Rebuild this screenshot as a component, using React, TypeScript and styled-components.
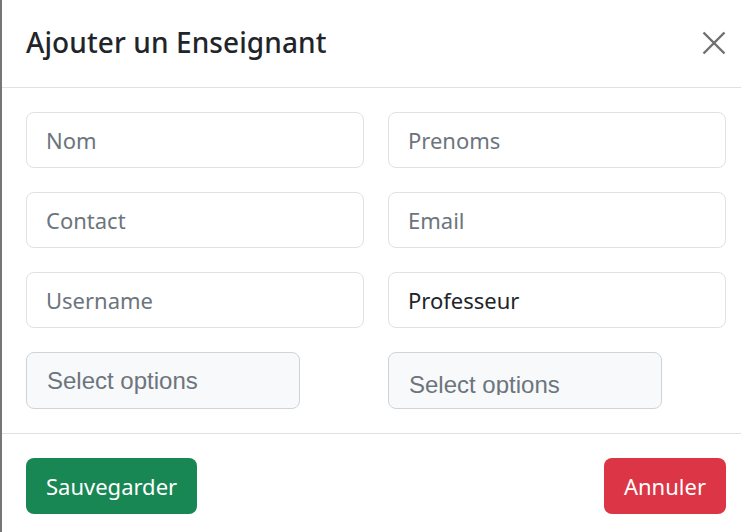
import styled, { createGlobalStyle } from "styled-components";

const GlobalStyle = createGlobalStyle`
  html, body {
    margin: 0;
    padding: 0;
    background: #ffffff;
  }
  body {
    font-family: "Noto Sans", "Open Sans", sans-serif;
    overflow: hidden;
  }
`;

const Backdrop = styled.div`
  width: 741px;
  height: 532px;
  border-left: 2px solid #767676;
  box-sizing: border-box;
  overflow: hidden;
`;

const ModalContent = styled.div`
  display: flex;
  flex-direction: column;
  background: #fff;
  border-bottom-left-radius: 8px;
`;

const ModalHeader = styled.div`
  display: flex;
  align-items: center;
  justify-content: space-between;
  height: 88px;
  padding: 0 15px 4px 24px;
  box-sizing: border-box;
  border-bottom: 1px solid #dee2e6;
`;

const ModalTitle = styled.h5`
  margin: 0;
  font-size: 28px;
  font-weight: 500;
  color: #212529;
  letter-spacing: 0.1px;
`;

const CloseButton = styled.button`
  width: 26px;
  height: 26px;
  padding: 0;
  border: none;
  background: transparent;
  display: flex;
  align-items: center;
  justify-content: center;
  margin-right: -1px;
  margin-top: 3px;
  cursor: pointer;
`;

const ModalBody = styled.div`
  display: grid;
  grid-template-columns: 338px 338px;
  column-gap: 24px;
  row-gap: 24px;
  padding: 24px 15px 24px 24px;
`;

const Input = styled.input`
  height: 56px;
  box-sizing: border-box;
  border: 1px solid #dee2e6;
  border-radius: 8px;
  padding: 0 19px;
  font-family: "Noto Sans", "Open Sans", sans-serif;
  font-size: 22px;
  color: #212529;
  background: #fff;
  outline: none;
  &::placeholder {
    color: #6c757d;
  }
`;

const SelectBox = styled.div`
  width: 274px;
  height: 57px;
  box-sizing: border-box;
  border: 1px solid #ced4da;
  border-radius: 8px;
  background: #f8f9fa;
  padding: 14px 20px 0;
`;

const SelectValue = styled.div<{ $offset: number }>`
  height: 28px;
  overflow: hidden;
  padding-top: ${(p) => p.$offset}px;
  box-sizing: border-box;
  font-family: "Liberation Sans", Arial, sans-serif;
  font-size: 24px;
  line-height: 27px;
  color: #6c757d;
  white-space: nowrap;
`;

const ModalFooter = styled.div`
  display: flex;
  justify-content: space-between;
  align-items: center;
  padding: 24px 15px 12px 24px;
  border-top: 1px solid #dee2e6;
`;

const Button = styled.button<{ $variant: "success" | "danger" }>`
  height: 56px;
  padding: 0 20px;
  border: none;
  border-radius: 8px;
  font-family: "Noto Sans", "Open Sans", sans-serif;
  font-size: 22px;
  color: #fff;
  background: ${(p) => (p.$variant === "success" ? "#198754" : "#dc3545")};
  cursor: pointer;
`;

const fields = [
  { placeholder: "Nom" },
  { placeholder: "Prenoms" },
  { placeholder: "Contact" },
  { placeholder: "Email" },
  { placeholder: "Username" },
  { value: "Professeur" },
];

export default function App() {
  return (
    <>
      <GlobalStyle />
      <Backdrop>
        <ModalContent>
          <ModalHeader>
            <ModalTitle>Ajouter un Enseignant</ModalTitle>
            <CloseButton aria-label="Close">
              <svg width="24" height="24" viewBox="0 0 24 24">
                <path
                  d="M1.5 1.5 L22.5 22.5 M22.5 1.5 L1.5 22.5"
                  stroke="#6f6f6f"
                  strokeWidth="2.4"
                  fill="none"
                />
              </svg>
            </CloseButton>
          </ModalHeader>
          <ModalBody>
            {fields.map((f, i) => (
              <Input
                key={i}
                placeholder={f.placeholder}
                defaultValue={f.value}
              />
            ))}
            <SelectBox>
              <SelectValue $offset={0}>Select options</SelectValue>
            </SelectBox>
            <SelectBox>
              <SelectValue $offset={4}>Select options</SelectValue>
            </SelectBox>
          </ModalBody>
          <ModalFooter>
            <Button $variant="success">Sauvegarder</Button>
            <Button $variant="danger">Annuler</Button>
          </ModalFooter>
        </ModalContent>
      </Backdrop>
    </>
  );
}
